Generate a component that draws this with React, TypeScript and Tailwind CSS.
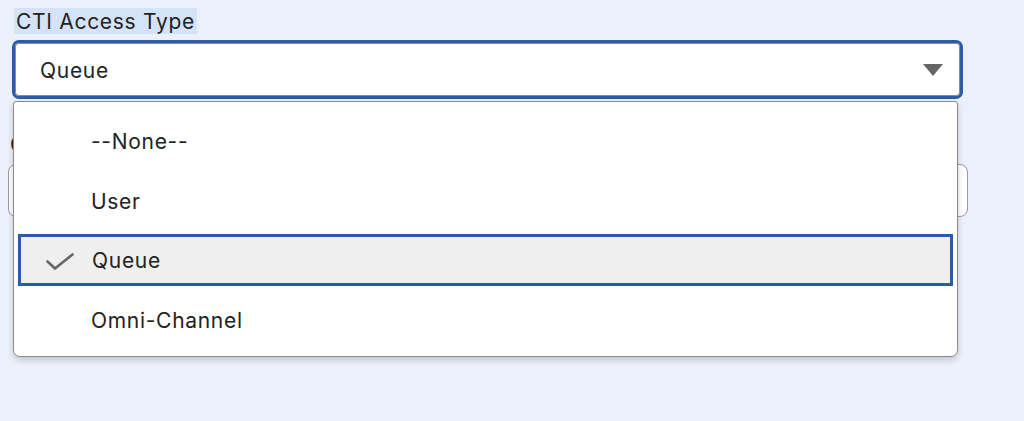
export default function App() {
  const rows = [
    { label: '--None--', selected: false },
    { label: 'User', selected: false },
    { label: 'Queue', selected: true },
    { label: 'Omni-Channel', selected: false },
  ];

  return (
    <div className="relative h-[421px] w-[1024px] overflow-hidden bg-[#ecf0fa] font-['Inter',sans-serif] text-[21px] tracking-[0.7px] text-[#222]">
      {/* CTI Access Type field */}
      <div className="w-[963px] pl-[12px] pt-[8px]">
        <div className="ml-[2px] h-[26px] w-fit bg-[#d5e3f8] px-[2px] leading-[28px]">CTI Access Type</div>
        <div className="mt-[6px] flex h-[59px] items-center justify-between rounded-[7px] border-[3px] border-[#2b5ca8] bg-white pl-[25px] pr-[17px] shadow-[inset_0_0_0_1px_#8c8c8c]">
          <span className="pt-[2px] leading-[28px]">Queue</span>
          <svg width="20" height="12" viewBox="0 0 20 12">
            <path d="M0 0 L20 0 L10 12 Z" fill="#666" />
          </svg>
        </div>
      </div>

      {/* next field, mostly hidden behind the open menu */}
      <div className="w-[968px] pl-[8px] pt-[32px]">
        <div className="ml-[2px] h-[26px] leading-[28px]">Call Center</div>
        <div className="mt-[7px] h-[53px] rounded-[8px] border border-[#9a9a9a] bg-white" />
      </div>

      {/* open menu */}
      <div className="absolute left-[13px] top-[101px] w-[945px] rounded-b-[7px] rounded-t-[3px] border-[1.5px] border-[#8a8a8a] bg-white pt-[10px] shadow-[0_3px_6px_rgba(0,0,0,0.18)]">
        {rows.map((r, i) =>
          r.selected ? (
            <div
              key={r.label}
              className="mx-[4px] mt-[2px] flex h-[52px] items-center border-[3px] border-[#2b5ca8] bg-[#efefef] pl-[25px] pt-[2px]"
            >
              <svg width="28" height="17" viewBox="0 0 28 17" className="mr-[18px]">
                <path d="M1.5 8.5 L9 15.5 L26.5 1.5" fill="none" stroke="#666" strokeWidth="2.6" strokeLinecap="round" strokeLinejoin="round" />
              </svg>
              <span>{r.label}</span>
            </div>
          ) : (
            <div
              key={r.label}
              className={`flex items-center pl-[77px] ${i === rows.length - 1 ? 'h-[70px]' : 'h-[60px]'}`}
            >
              <span>{r.label}</span>
            </div>
          ),
        )}
      </div>
    </div>
  );
}
